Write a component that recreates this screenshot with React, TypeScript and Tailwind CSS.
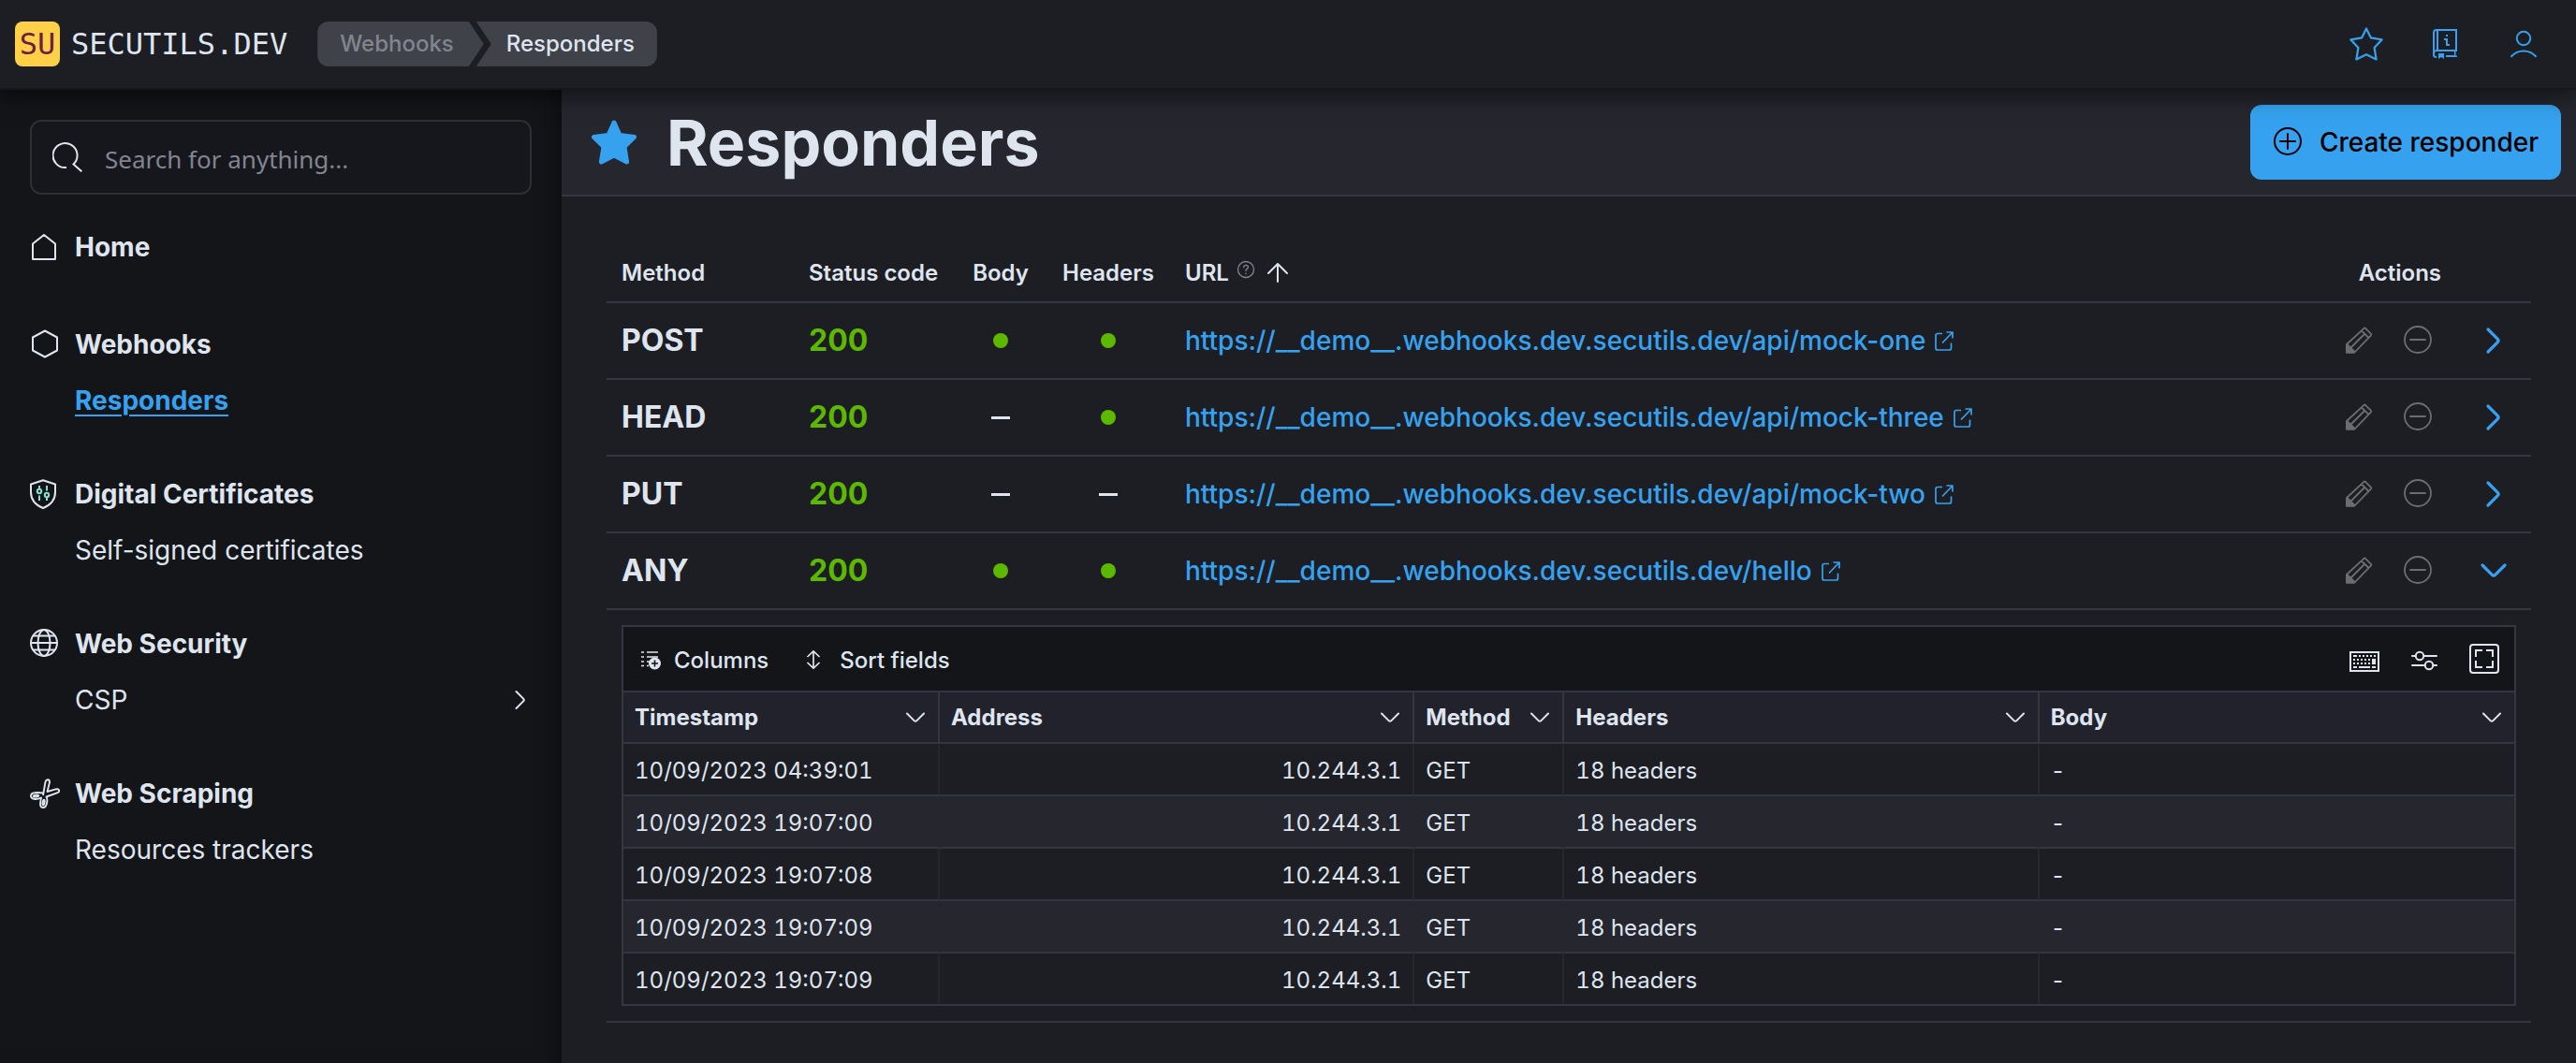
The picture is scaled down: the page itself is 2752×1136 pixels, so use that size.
import type { ReactNode } from 'react';

type IconProps = { className?: string };

const iconBase = 'shrink-0 fill-none stroke-current';

function StarOutline() {
  return (
    <svg viewBox="0 0 36 36" className={`${iconBase} size-9`} strokeWidth="2.2" strokeLinejoin="round">
      <path d="M18 1.5 22.8 11.3 34.6 13.4 26.6 22 28.6 34.4 18 29.2 7.4 34.4 9.4 22 1.4 13.4 13.2 11.3Z" />
    </svg>
  );
}

function StarFilled() {
  return (
    <svg viewBox="0 0 48 48" className="size-12 shrink-0 fill-current stroke-current" strokeWidth="5" strokeLinejoin="round">
      <path d="M24 3 30 16.4 45.5 18.4 35 28.8 37.6 45 24 38 10.4 45 13 28.8 2.5 18.4 18 16.4Z" />
    </svg>
  );
}

function Book() {
  return (
    <svg viewBox="0 0 26 32" className="h-8 w-[26px] shrink-0 fill-current">
      <path d="M4 0h22v24h-1.500v4.500H26V30H14v-2h9v-4H4a2 2 0 0 0-2 2v2q0 1 2 1v2q-4 0-4-3V4q0-4 4-4Zm2 2v20h18V2ZM4 2Q2 2 2 4v18.500Q3 22 4 22Z" fillRule="evenodd" />
      <path d="M6 26h6v6l-3-2-3 2ZM14 6h2v2h-2ZM12 10h4v6h2v2h-4v-6h-2Z" />
    </svg>
  );
}

function User() {
  return (
    <svg viewBox="0 0 32 32" className={`${iconBase} size-8`} strokeWidth="2" strokeLinecap="round">
      <circle cx="16" cy="10" r="7.200" />
      <path d="M3 29.200c7-7.600 19-7.600 26 0" />
    </svg>
  );
}

function Search() {
  return (
    <svg viewBox="0 0 32 32" className={`${iconBase} size-8`} strokeWidth="2">
      <path d="M15 27A13 13 0 1 1 22.500 23.500L31.300 31.300" />
    </svg>
  );
}

function Home() {
  return (
    <svg viewBox="0 0 32 32" className={`${iconBase} size-8`} strokeWidth="2" strokeLinejoin="round">
      <path d="M15 3 27 12.500V29H3V12.500Z" />
    </svg>
  );
}

function Hexagon() {
  return (
    <svg viewBox="0 0 32 32" className={`${iconBase} size-8`} strokeWidth="2" strokeLinejoin="round">
      <path d="M16 1.500 29 8.500V22.500L16 29.500 3 22.500V8.500Z" />
    </svg>
  );
}

function Shield() {
  return (
    <svg viewBox="0 0 32 32" className={`${iconBase} size-8`} strokeWidth="2" strokeLinejoin="round">
      <path d="M14 1.300 27 5.500V14C27 22 22.500 27.500 14 31 5.500 27.500 1 22 1 14V5.500Z" />
      <g className="stroke-[#7de2d1]">
        <circle cx="10" cy="13" r="2.200" />
        <circle cx="18" cy="17" r="2.200" />
        <path d="M10 7v3.500M10 17.500V23M18 7v5.500M18 19.500V23" />
      </g>
    </svg>
  );
}

function Globe() {
  return (
    <svg viewBox="0 0 32 32" className={`${iconBase} size-8`} strokeWidth="2">
      <circle cx="15" cy="15" r="14" />
      <ellipse cx="15" cy="15" rx="6.500" ry="14" />
      <path d="M1 15h28M3.500 7.500h23M3.500 22.500h23" />
    </svg>
  );
}

function Scissors() {
  return (
    <svg viewBox="0 0 32 32" className={`${iconBase} size-8`} strokeWidth="1.900" strokeLinejoin="round">
      <path d="M14 18 16.500 3.500Q17.300 1 19.200 1.300T21 4L18.500 14 28.500 11.200Q31 11 31.200 12.800T29.500 15.200L17.500 19.500Q19 22 18 26.500 17 31 14 31 10.500 31 11.200 26 11.500 22 12 20.500 9 22 5.500 22 1 21.500 1 18.800 1 15.500 5 15.200 9 14.600 14 15.500" />
      <ellipse cx="6.500" cy="18.600" rx="2.800" ry="1" transform="rotate(-6 6.500 18.600)" />
      <ellipse cx="14.600" cy="25.500" rx="1" ry="2.800" transform="rotate(10 14.600 25.500)" />
    </svg>
  );
}

function Chevron({ className = '' }: IconProps) {
  return (
    <svg viewBox="0 0 24 24" className={`${iconBase} ${className}`} strokeWidth="2" strokeLinecap="round" strokeLinejoin="round">
      <path d="m3 7.500 7.600 7.600q1.400 1.400 2.800 0L21 7.500" />
    </svg>
  );
}

function PlusCircle() {
  return (
    <svg viewBox="0 0 32 32" className={`${iconBase} size-8`} strokeWidth="2" strokeLinecap="round">
      <circle cx="16" cy="15" r="14" />
      <path d="M8 15h16M16 7v16" />
    </svg>
  );
}

function MinusCircle() {
  return (
    <svg viewBox="0 0 32 32" className={`${iconBase} size-8`} strokeWidth="1.800" strokeLinecap="round">
      <circle cx="15" cy="15" r="14" />
      <path d="M7 15h16" />
    </svg>
  );
}

function Pencil() {
  return (
    <svg viewBox="0 0 32 32" className={`${iconBase} size-8`} strokeWidth="1.800" strokeLinejoin="round">
      <path d="M3 20 21.500 2.800q.8-.6 1.500 0l6 6q.7.7 0 1.500L11.500 28.500H3ZM19 5.500l7.500 7.500M22.500 8.500 7.500 23.500M3.500 20l8 8" />
      <path d="M3 20.500v8h8Z" className="fill-current" />
    </svg>
  );
}

function Help() {
  return (
    <svg viewBox="0 0 20 20" className={`${iconBase} size-5 text-[#81858f]`} strokeWidth="1.300" strokeLinecap="round">
      <circle cx="10" cy="10" r="8.500" />
      <path d="M7.700 7.600q.2-2.300 2.400-2.300t2.300 2.100q0 1.200-1.300 2-1.100.7-1.100 2M10 14v.5" />
    </svg>
  );
}

function ArrowUp() {
  return (
    <svg viewBox="0 0 24 24" className={`${iconBase} size-6`} strokeWidth="2" strokeLinecap="round" strokeLinejoin="round">
      <path d="M12 21V2M2 12 12 2l10 10" />
    </svg>
  );
}

function External() {
  return (
    <svg viewBox="0 0 24 24" className={`${iconBase} size-6`} strokeWidth="1.700" strokeLinejoin="round">
      <path d="M10 4.500H5Q3 4.500 3 6.500V20q0 2 2 2h12.500q2 0 2-2v-5.500M14.500 3H21v6.500M21 3 10 14.500" />
    </svg>
  );
}

function ColumnsIcon() {
  return (
    <svg viewBox="0 0 32 32" className={`${iconBase} size-8`} strokeWidth="1.600">
      <path d="M5 9h3M11 9h12M5 14h3M11 14h12M5 19h3M11 19h4M5 23.500h3M11 23.500h2" />
      <circle cx="19.500" cy="21" r="6.500" className="fill-current" stroke="none" />
      <path d="M16 21h7M19.500 17.500v7" className="stroke-[#141519]" />
    </svg>
  );
}

function SortIcon() {
  return (
    <svg viewBox="0 0 32 32" className={`${iconBase} size-8`} strokeWidth="1.700" strokeLinejoin="round">
      <path d="M16 8v18M9.500 14 16 7.800 22.500 14M9.500 20l6.500 6.200 6.500-6.200" />
    </svg>
  );
}

function Keyboard() {
  return (
    <svg viewBox="0 0 32 32" className={`${iconBase} size-8`} strokeWidth="2">
      <path d="M1 9h30v20H1Z" />
      <path d="M4 13h4M10 13h2M14 13h2M18 13h2M22 13h2M26 13h2M4 17h2M8 17h2M12 17h2M16 17h2M20 17h2M4 21h2M8 21h2M12 21h2M16 21h2M20 21h2M4 25h4M10 25h12M24 25h4" />
      <path d="M26 16v6" strokeWidth="4" />
    </svg>
  );
}

function Sliders() {
  return (
    <svg viewBox="0 0 32 32" className={`${iconBase} size-8`} strokeWidth="2" strokeLinecap="round">
      <path d="M3 13h3M16 13h13M3 23h13M26 23h3" />
      <circle cx="11" cy="13" r="4.200" />
      <circle cx="21" cy="23" r="4.200" />
    </svg>
  );
}

function FullScreen() {
  return (
    <svg viewBox="0 0 32 32" className={`${iconBase} size-8`} strokeWidth="2">
      <rect x="1" y="1" width="30" height="30" rx="3" />
      <path d="M7 14V7h7M18 7h7v7M25 18v7h-7M14 25H7v-7" />
    </svg>
  );
}

function IconButton({ label, className = '', children }: { label: string; className?: string; children: ReactNode }) {
  return (
    <button type="button" aria-label={label} className={`flex items-center justify-center ${className}`}>
      {children}
    </button>
  );
}

function Header() {
  return (
    <header className="relative z-10 flex h-24 items-center border-b-2 border-[#15161b] bg-[#1d1e24] px-4 shadow-[0_4px_24px_rgba(0,0,0,0.6)]">
      <a href="#home" className="flex items-center gap-3 font-['DejaVu_Sans_Mono',monospace] text-[32px] leading-none">
        <span className="flex size-12 items-center justify-center rounded-lg bg-[#fed047] text-[#69203f]">SU</span>
        <span>SECUTILS.DEV</span>
      </a>
      <nav aria-label="Breadcrumbs" className="ml-8 flex text-2xl font-medium">
        <a
          href="#webhooks"
          className="flex h-12 items-center rounded-l-xl bg-[#404249] pr-8 pl-6 text-[#81858f] [clip-path:polygon(0_0,calc(100%-16px)_0,100%_50%,calc(100%-16px)_100%,0_100%)]"
        >
          Webhooks
        </a>
        <span
          aria-current="page"
          className="-ml-2 flex h-12 items-center rounded-r-xl bg-[#404249] pr-6 pl-8 [clip-path:polygon(0_0,100%_0,100%_100%,0_100%,16px_50%)]"
        >
          Responders
        </span>
      </nav>
      <div className="ml-auto flex gap-1 text-[#36a2ef]">
        <IconButton label="Favorites" className="h-12 w-20"><StarOutline /></IconButton>
        <IconButton label="Documentation" className="h-12 w-20"><Book /></IconButton>
        <IconButton label="Account" className="h-12 w-20"><User /></IconButton>
      </div>
    </header>
  );
}

function NavGroup({ icon, title, children }: { icon: ReactNode; title: string; children: ReactNode }) {
  return (
    <section className="mb-10">
      <h2 className="flex h-[60px] items-center gap-4 font-bold">
        {icon}
        {title}
      </h2>
      <div className="flex h-[60px] items-center pl-12">{children}</div>
    </section>
  );
}

function Sidebar() {
  return (
    <aside className="w-[600px] shrink-0 bg-[#141519] p-8 text-[28px] shadow-[inset_-16px_0_24px_-12px_rgba(0,0,0,0.4)]">
      <label className="flex h-20 items-center gap-6 rounded-xl border-2 border-[#2d2f34] bg-[#16171c] px-[22px]">
        <Search />
        <input
          type="search"
          aria-label="Search"
          placeholder="Search for anything..."
          className="min-w-0 flex-1 bg-transparent pt-1 font-['Noto_Sans',sans-serif] text-[26px] outline-none placeholder:text-[#81858f]"
        />
      </label>
      <nav aria-label="Main" className="mt-6">
        <a href="#home" className="mb-[42px] flex h-16 items-center gap-4 font-bold">
          <Home />
          Home
        </a>
        <NavGroup icon={<Hexagon />} title="Webhooks">
          <a href="#responders" className="font-bold text-[#36a2ef] underline decoration-2 underline-offset-[5px]">Responders</a>
        </NavGroup>
        <NavGroup icon={<Shield />} title="Digital Certificates">
          <a href="#certificates">Self-signed certificates</a>
        </NavGroup>
        <NavGroup icon={<Globe />} title="Web Security">
          <button type="button" className="flex flex-1 items-center justify-between">
            CSP
            <Chevron className="size-6 -rotate-90" />
          </button>
        </NavGroup>
        <NavGroup icon={<Scissors />} title="Web Scraping">
          <a href="#trackers">Resources trackers</a>
        </NavGroup>
      </nav>
    </aside>
  );
}

const responders = [
  { method: 'POST', body: true, headers: true, url: 'https://__demo__.webhooks.dev.secutils.dev/api/mock-one', open: false },
  { method: 'HEAD', body: false, headers: true, url: 'https://__demo__.webhooks.dev.secutils.dev/api/mock-three', open: false },
  { method: 'PUT', body: false, headers: false, url: 'https://__demo__.webhooks.dev.secutils.dev/api/mock-two', open: false },
  { method: 'ANY', body: true, headers: true, url: 'https://__demo__.webhooks.dev.secutils.dev/hello', open: true },
];

const requests = [
  '10/09/2023 04:39:01',
  '10/09/2023 19:07:00',
  '10/09/2023 19:07:08',
  '10/09/2023 19:07:09',
  '10/09/2023 19:07:09',
];

function Flag({ on }: { on: boolean }) {
  return on ? (
    <span role="img" aria-label="Yes" className="mx-auto block size-4 rounded-full bg-[#5cb800]" />
  ) : (
    <span role="img" aria-label="No" className="mx-auto block h-[3px] w-5 bg-current" />
  );
}

function RequestsGrid() {
  return (
    <div className="border-2 border-[#343741]">
      <div className="flex h-[68px] items-center bg-[#141519] pr-2 pl-[14px] text-2xl font-medium">
        <button type="button" className="flex items-center gap-2">
          <ColumnsIcon />
          <span className="pt-1">Columns</span>
        </button>
        <button type="button" className="ml-8 flex items-center gap-3">
          <SortIcon />
          <span className="pt-1">Sort fields</span>
        </button>
        <div className="ml-auto flex gap-4">
          <IconButton label="Keyboard shortcuts" className="size-12"><Keyboard /></IconButton>
          <IconButton label="Display options" className="size-12"><Sliders /></IconButton>
          <IconButton label="Full screen" className="size-12"><FullScreen /></IconButton>
        </div>
      </div>
      <table className="w-full table-fixed border-separate border-spacing-0 text-2xl">
        <colgroup>
          <col className="w-[338px]" />
          <col />
          <col className="w-40" />
          <col />
          <col />
        </colgroup>
        <thead>
          <tr className="h-[57px]">
            {['Timestamp', 'Address', 'Method', 'Headers', 'Body'].map((name) => (
              <th key={name} className="border-y-2 border-r-2 border-[#343741] bg-[#21222b] px-3 text-left font-bold last:border-r-0">
                <span className="flex items-center justify-between">
                  {name}
                  <IconButton label={`${name} column actions`}><Chevron className="size-6" /></IconButton>
                </span>
              </th>
            ))}
          </tr>
        </thead>
        <tbody className="tabular-nums">
          {requests.map((time, i) => {
            const line = i === requests.length - 1 ? '' : 'border-b-2 border-b-[#343741]';
            const cell = `border-r-2 border-r-[#25262e] px-3 pt-1 last:border-r-0 ${line}`;
            return (
              <tr key={i} className={i === requests.length - 1 ? 'h-[54px]' : 'h-14 even:bg-[#25262e]'}>
                <td className={cell}>{time}</td>
                <td className={`${cell} text-right`}>10.244.3.1</td>
                <td className={cell}>GET</td>
                <td className={cell}>18 headers</td>
                <td className={cell}>-</td>
              </tr>
            );
          })}
        </tbody>
      </table>
    </div>
  );
}

function RespondersTable() {
  const rule = 'border-b-2 border-[#343741]';
  const head = `${rule} pt-1 font-semibold`;
  return (
    <table className="w-full table-fixed border-separate border-spacing-0">
      <colgroup>
        <col className="w-[200px]" />
        <col className="w-[172px]" />
        <col className="w-[98px]" />
        <col className="w-[132px]" />
        <col />
        <col className="w-[160px]" />
        <col className="w-20" />
      </colgroup>
      <thead>
        <tr className="h-[66px] text-left text-2xl">
          <th className={`${head} px-4`}>Method</th>
          <th className={`${head} px-4`}>Status code</th>
          <th className={`${head} text-center`}>Body</th>
          <th className={`${head} text-center`}>Headers</th>
          <th className={`${head} px-4`} aria-sort="ascending">
            <button type="button" className="flex items-center">
              URL
              <span className="mr-3 mb-2 ml-2"><Help /></span>
              <ArrowUp />
            </button>
          </th>
          <th className={`${head} px-4 text-right`}>Actions</th>
          <th className={rule} aria-label="Details" />
        </tr>
      </thead>
      <tbody>
        {responders.map((r) => (
          <tr key={r.method} className="h-[82px]">
            <td className={`${rule} px-4 text-[32px] font-bold`}>{r.method}</td>
            <td className={`${rule} px-4 text-[32px] font-bold text-[#5cb800]`}>200</td>
            <td className={rule}><Flag on={r.body} /></td>
            <td className={rule}><Flag on={r.headers} /></td>
            <td className={`${rule} px-4`}>
              <a href={r.url} className="flex items-center gap-2 text-[28px] font-medium text-[#36a2ef]">
                {r.url}
                <External />
              </a>
            </td>
            <td className={`${rule} px-4`}>
              <div className="flex justify-end gap-4 text-[#6d6d70]">
                <IconButton label="Edit" className="size-12"><Pencil /></IconButton>
                <IconButton label="Remove" className="size-12"><MinusCircle /></IconButton>
              </div>
            </td>
            <td className={rule}>
              <IconButton label={r.open ? 'Hide requests' : 'Show requests'} className="mx-auto size-12 text-[#36a2ef]">
                <Chevron className={r.open ? 'size-8 stroke-[2.4]' : 'size-8 -rotate-90 stroke-[2.4]'} />
              </IconButton>
            </td>
          </tr>
        ))}
        <tr>
          <td colSpan={7} className={`${rule} p-4`}>
            <RequestsGrid />
          </td>
        </tr>
      </tbody>
    </table>
  );
}

export default function App() {
  return (
    <div className="flex min-h-screen flex-col bg-[#1d1e24] font-['Inter',sans-serif] text-[#dfe5ef]">
      <Header />
      <div className="flex flex-1">
        <Sidebar />
        <main className="min-w-0 flex-1">
          <div className="flex h-[114px] items-center border-b-2 border-[#343741] bg-[#25262e] pr-4 pl-8">
            <button type="button" aria-label="Remove from favorites" className="text-[#36a2ef]"><StarFilled /></button>
            <h1 className="ml-8 text-[68px] leading-none font-bold">Responders</h1>
            <button type="button" className="ml-auto flex h-20 items-center gap-[18px] rounded-xl bg-[#36a2ef] px-6 text-[28px] font-medium text-black">
              <PlusCircle />
              Create responder
            </button>
          </div>
          <div className="p-12 pb-0">
            <RespondersTable />
          </div>
        </main>
      </div>
    </div>
  );
}
